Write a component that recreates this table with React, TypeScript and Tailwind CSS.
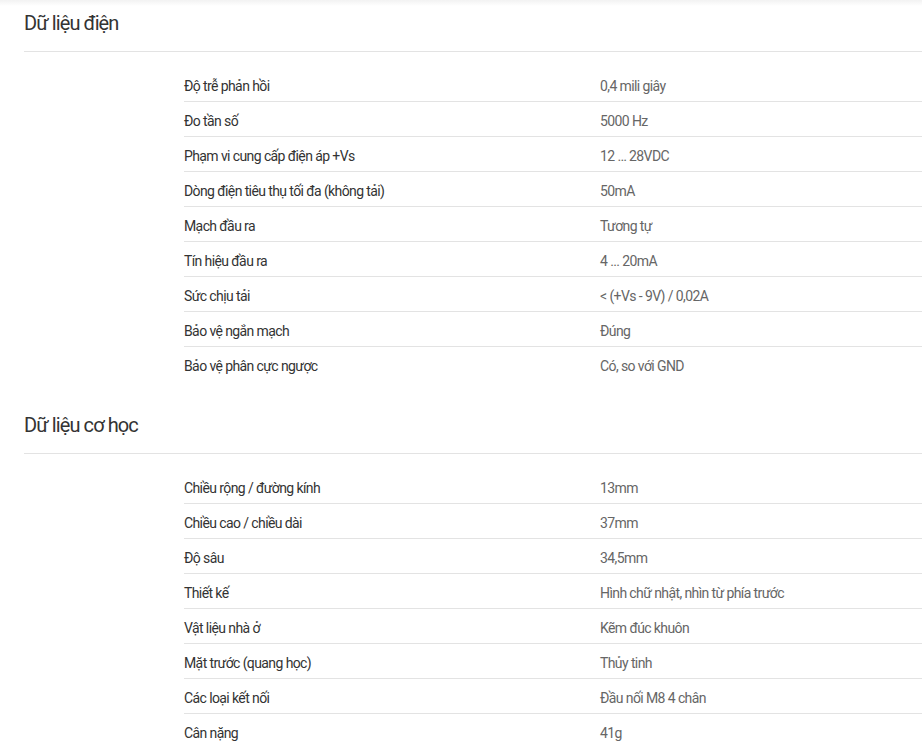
import { type FC } from "react";

type Row = [string, string];

const dienRows: Row[] = [
  ["Độ trễ phản hồi", "0,4 mili giây"],
  ["Đo tần số", "5000 Hz"],
  ["Phạm vi cung cấp điện áp +Vs", "12 … 28VDC"],
  ["Dòng điện tiêu thụ tối đa (không tải)", "50mA"],
  ["Mạch đầu ra", "Tương tự"],
  ["Tín hiệu đầu ra", "4 ... 20mA"],
  ["Sức chịu tải", "< (+Vs - 9V) / 0,02A"],
  ["Bảo vệ ngắn mạch", "Đúng"],
  ["Bảo vệ phân cực ngược", "Có, so với GND"],
];

const coHocRows: Row[] = [
  ["Chiều rộng / đường kính", "13mm"],
  ["Chiều cao / chiều dài", "37mm"],
  ["Độ sâu", "34,5mm"],
  ["Thiết kế", "Hình chữ nhật, nhìn từ phía trước"],
  ["Vật liệu nhà ở", "Kẽm đúc khuôn"],
  ["Mặt trước (quang học)", "Thủy tinh"],
  ["Các loại kết nối", "Đầu nối M8 4 chân"],
  ["Cân nặng", "41g"],
];

interface SpecSectionProps {
  title: string;
  rows: Row[];
  className?: string;
}

const SpecSection: FC<SpecSectionProps> = ({ title, rows, className }) => {
  return (
    <section className={className}>
      <h2 className="text-[20px] leading-[28px] tracking-[-0.9px] text-[#333] pt-[9px] pb-[14px] border-b border-[#e3e3e3]">
        {title}
      </h2>
      <div className="pl-[160px] pt-[15px]">
        {rows.map(([label, value], index) => (
          <div
            key={label}
            className={
              index < rows.length - 1
                ? "flex h-[35px] items-center pt-[4px] border-b border-[#e3e3e3] text-[14px] tracking-[-0.6px]"
                : "flex h-[35px] items-center pt-[4px] text-[14px] tracking-[-0.6px]"
            }
          >
            <span className="w-[416px] text-[#333]">{label}</span>
            <span className="text-[#666]">{value}</span>
          </div>
        ))}
      </div>
    </section>
  );
};

export default function App() {
  return (
    <div
      className="min-h-screen bg-white pl-[24px] relative"
      style={{ fontFamily: "Roboto, 'Noto Sans', sans-serif" }}
    >
      <div className="absolute inset-x-0 top-0 h-[6px] bg-gradient-to-b from-[#f2f2f2] to-white" />
      <SpecSection title="Dữ liệu điện" rows={dienRows} />
      <SpecSection title="Dữ liệu cơ học" rows={coHocRows} className="mt-[20px]" />
    </div>
  );
}
